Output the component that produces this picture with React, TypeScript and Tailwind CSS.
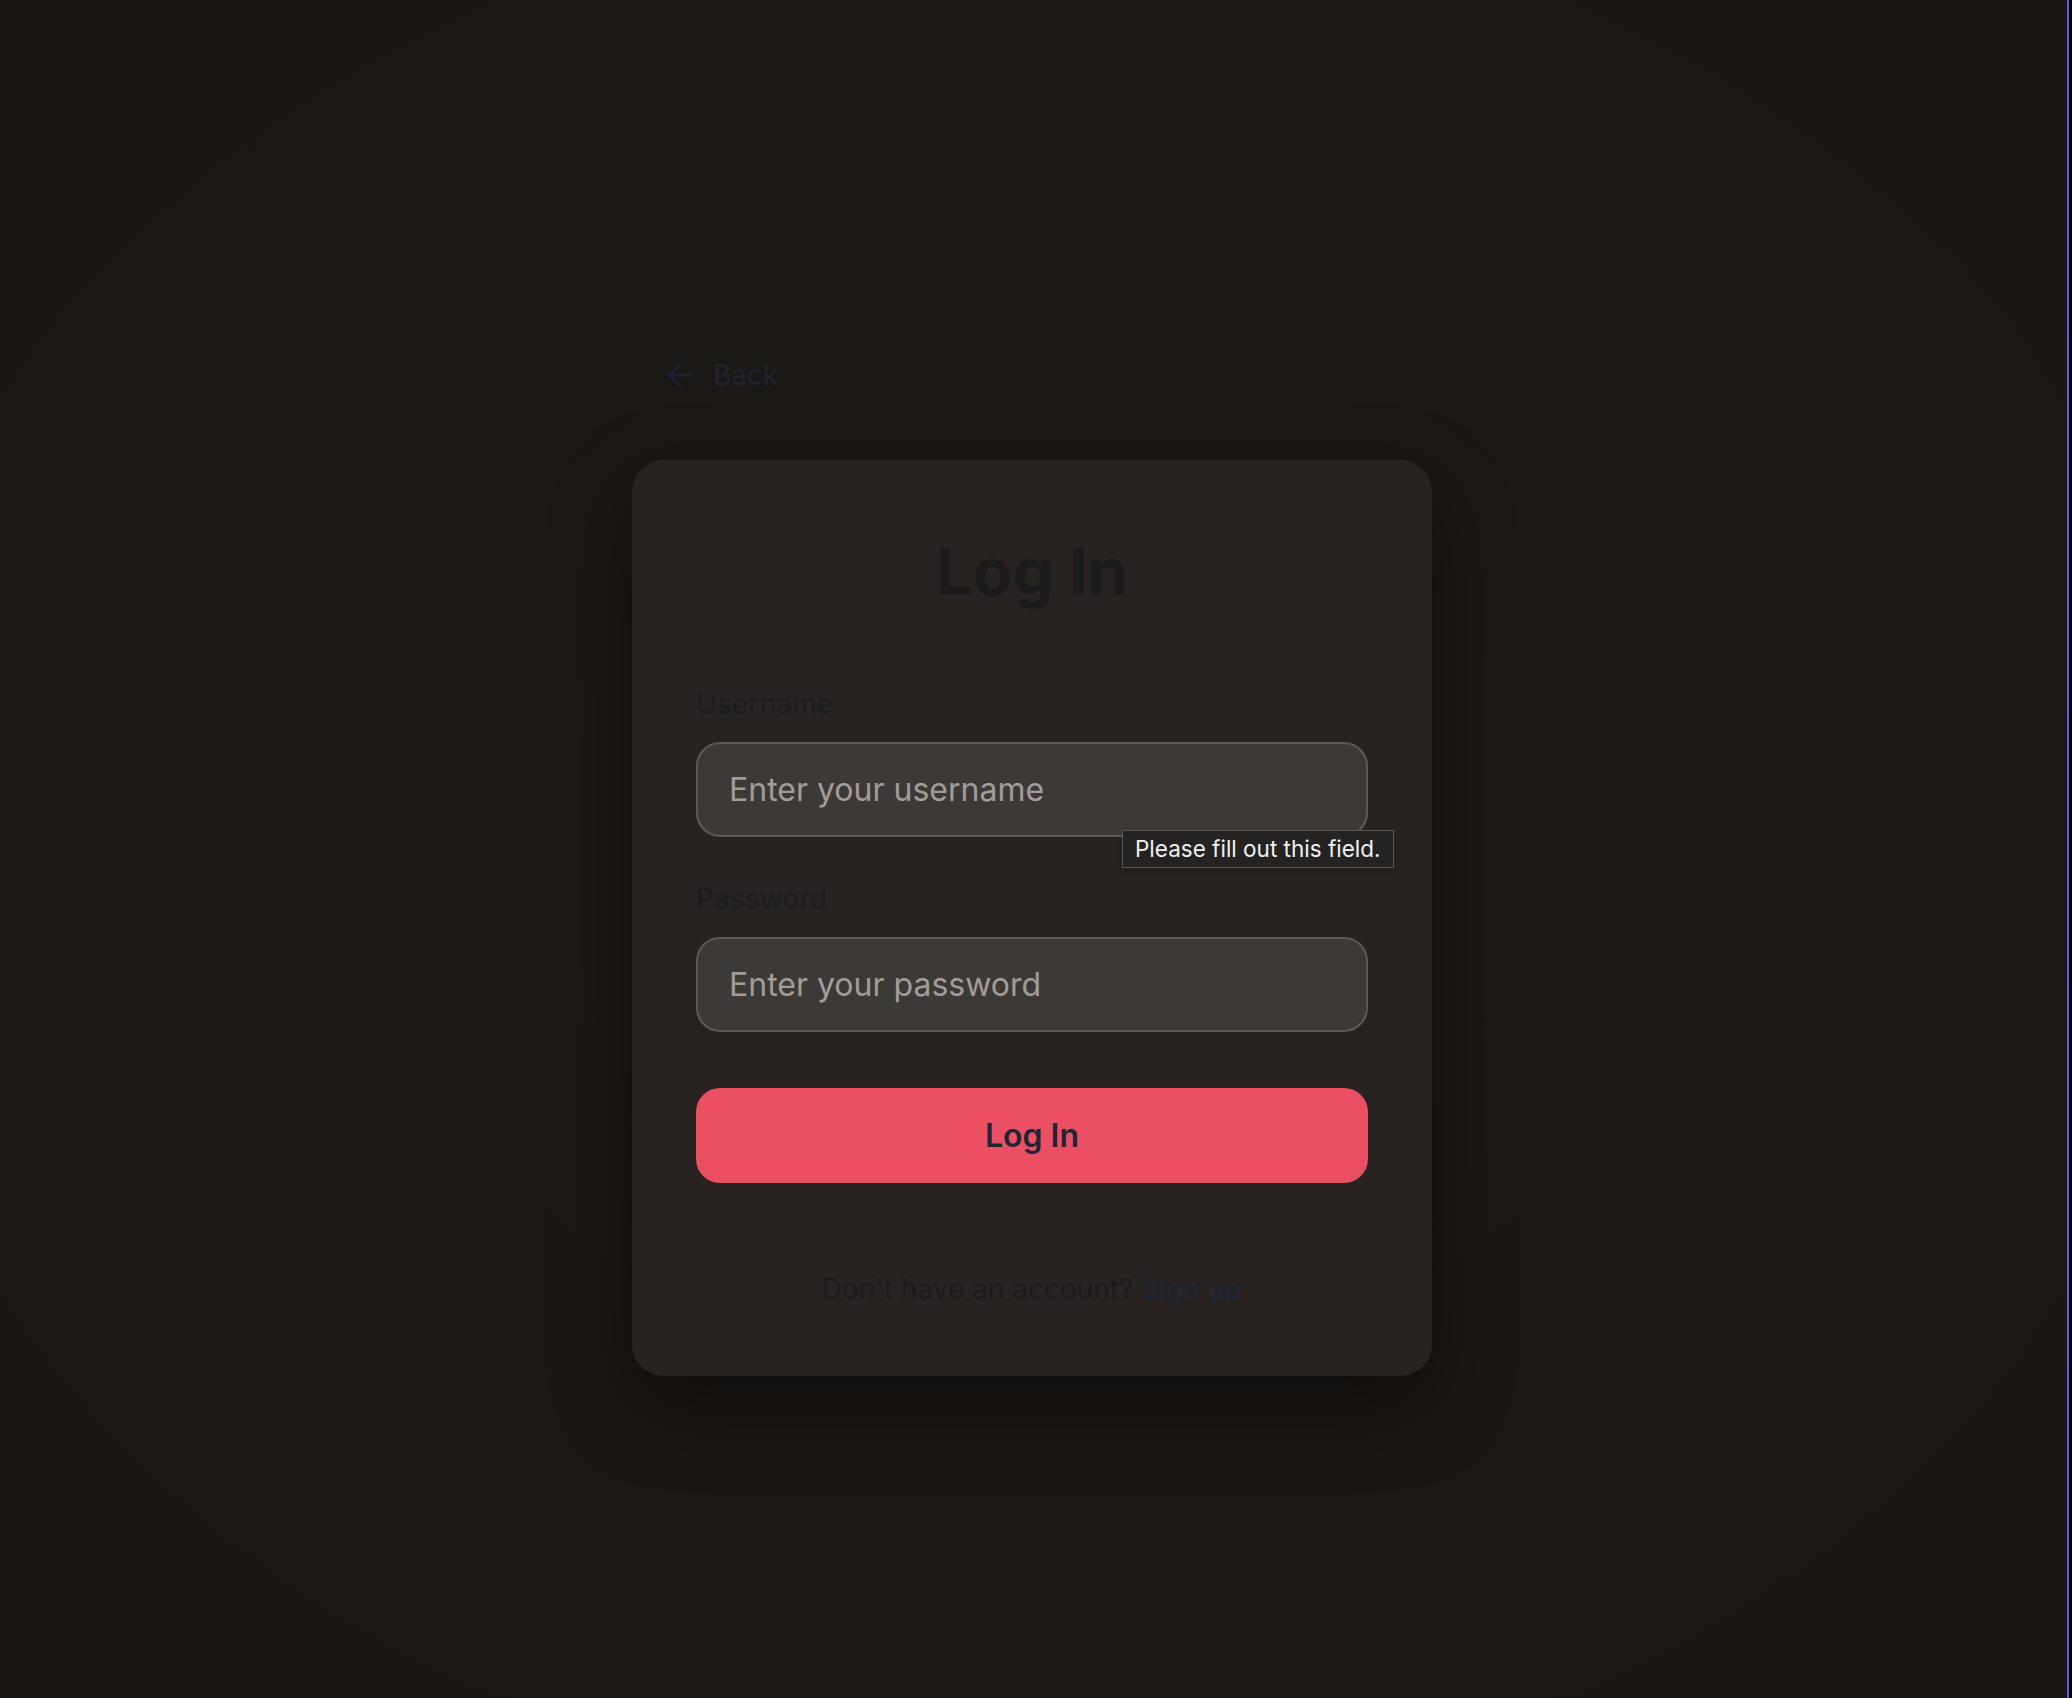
import * as React from 'react';

const ArrowLeft = () => (
  <svg
    width="36"
    height="36"
    viewBox="0 0 24 24"
    fill="none"
    stroke="currentColor"
    strokeWidth="1.6"
    strokeLinecap="round"
    strokeLinejoin="round"
  >
    <path d="m12 19-7-7 7-7" />
    <path d="M19 12H5" />
  </svg>
);

const Field = ({
  label,
  placeholder,
  type,
  tooltip,
}: {
  label: string;
  placeholder: string;
  type: string;
  tooltip?: string;
}) => (
  <div className="flex flex-col">
    <label className="text-[28px] leading-[40px] font-medium text-[#1e1d1d] mb-[18px]">{label}</label>
    <div className="relative">
      <input
        type={type}
        placeholder={placeholder}
        className="w-full h-[95px] px-[31px] rounded-[24px] bg-[#3d3936] border-2 border-[#5f5a56] text-[32px] text-[#e5e5e5] placeholder:text-[#a29d99] outline-none"
      />
      {tooltip && (
        <div className="absolute left-[426px] top-[88px] h-[38px] px-[12px] flex items-center bg-[#252321] border border-[#5a5753] shadow-md text-[22.5px] text-[#f0f0f0] whitespace-nowrap font-['Inter',sans-serif]">
          {tooltip}
        </div>
      )}
    </div>
  </div>
);

export default function App() {
  return (
    <div className="flex w-full min-h-[1698px] bg-black font-['Inter','Noto_Sans',sans-serif]">
      <main className="flex-1 flex flex-col items-center pt-[355px] pr-[3px] bg-[radial-gradient(ellipse_at_center,#1d1916_0%,#1b1714_60%,#1a1613_100%)] border-r-2 border-[#6a5ad8] mr-[3px]">
        <div className="w-[800px] flex flex-col">
          <a className="ml-[30px] h-[40px] flex items-center gap-[15px] text-[#1f2433] text-[28px] cursor-pointer">
            <ArrowLeft />
            <span>Back</span>
          </a>
          <div className="mt-[65px] w-[800px] rounded-[32px] bg-[#282321] shadow-[0_30px_80px_rgba(0,0,0,0.45)] px-[64px] pt-[72px] pb-[67px] flex flex-col">
            <h1 className="text-[65px] leading-[80px] font-bold text-center text-[#1b1b1c] mb-[72px]">Log In</h1>
            <div className="flex flex-col gap-[42px]">
              <Field label="Username" placeholder="Enter your username" type="text" tooltip="Please fill out this field." />
              <Field label="Password" placeholder="Enter your password" type="password" />
            </div>
            <button className="mt-[56px] h-[95px] w-full rounded-[24px] bg-[#eb4f63] text-[32px] font-semibold text-[#1f2535]">
              Log In
            </button>
            <p className="mt-[86px] text-[28px] leading-[40px] text-center text-[#1c1b1b]">
              Don't have an account? <span className="text-[#1e2838] font-medium">Sign up</span>
            </p>
          </div>
        </div>
      </main>
    </div>
  );
}
